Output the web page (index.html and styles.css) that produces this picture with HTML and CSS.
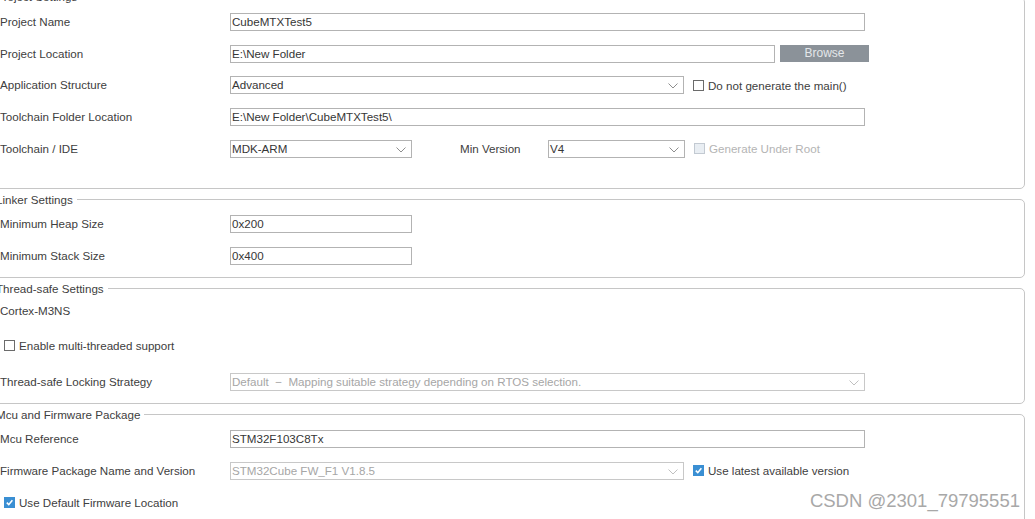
FILE: index.html
```html
<!DOCTYPE html>
<html>
<head>
<meta charset="utf-8">
<title>Project Settings</title>
<link rel="stylesheet" href="styles.css">
</head>
<body>
<div class="page">
  <fieldset class="group g-project">
    <legend>Project Settings</legend>
    <div class="row">
      <span class="label">Project Name</span>
      <div class="field w-full">CubeMTXTest5</div>
    </div>
    <div class="row">
      <span class="label">Project Location</span>
      <div class="field w-loc">E:\New Folder</div>
      <div class="btn">Browse</div>
    </div>
    <div class="row">
      <span class="label">Application Structure</span>
      <div class="field select w-wide">Advanced<svg class="chev" viewBox="0 0 10 6"><polyline points="0.5,0.5 5,5 9.5,0.5"/></svg></div>
      <label class="check"><span class="box"></span>Do not generate the main()</label>
    </div>
    <div class="row">
      <span class="label">Toolchain Folder Location</span>
      <div class="field w-full">E:\New Folder\CubeMTXTest5\</div>
    </div>
    <div class="row">
      <span class="label">Toolchain / IDE</span>
      <div class="field select w-short">MDK-ARM<svg class="chev" viewBox="0 0 10 6"><polyline points="0.5,0.5 5,5 9.5,0.5"/></svg></div>
      <span class="minlabel">Min Version</span>
      <div class="field select w-ver">V4<svg class="chev" viewBox="0 0 10 6"><polyline points="0.5,0.5 5,5 9.5,0.5"/></svg></div>
      <label class="check disabled"><span class="box"></span>Generate Under Root</label>
    </div>
  </fieldset>

  <fieldset class="group g-linker">
    <legend>Linker Settings</legend>
    <div class="row">
      <span class="label">Minimum Heap Size</span>
      <div class="field w-short">0x200</div>
    </div>
    <div class="row">
      <span class="label">Minimum Stack Size</span>
      <div class="field w-short">0x400</div>
    </div>
  </fieldset>

  <fieldset class="group g-thread">
    <legend>Thread-safe Settings</legend>
    <div class="row row-core">
      <span class="label">Cortex-M3NS</span>
    </div>
    <div class="row row-multi">
      <label class="check inset"><span class="box"></span>Enable multi-threaded support</label>
    </div>
    <div class="row">
      <span class="label">Thread-safe Locking Strategy</span>
      <div class="field select w-full dim">Default &nbsp;&minus;&nbsp; Mapping suitable strategy depending on RTOS selection.<svg class="chev" viewBox="0 0 10 6"><polyline points="0.5,0.5 5,5 9.5,0.5"/></svg></div>
    </div>
  </fieldset>

  <fieldset class="group g-mcu">
    <legend>Mcu and Firmware Package</legend>
    <div class="row">
      <span class="label">Mcu Reference</span>
      <div class="field w-full">STM32F103C8Tx</div>
    </div>
    <div class="row">
      <span class="label">Firmware Package Name and Version</span>
      <div class="field select w-wide dim">STM32Cube FW_F1 V1.8.5<svg class="chev" viewBox="0 0 10 6"><polyline points="0.5,0.5 5,5 9.5,0.5"/></svg></div>
      <label class="check checked"><span class="box"><svg viewBox="0 0 10 10"><polyline points="2,5.2 4.2,7.4 8.2,2.6"/></svg></span>Use latest available version</label>
    </div>
    <div class="row">
      <label class="check checked inset"><span class="box"><svg viewBox="0 0 10 10"><polyline points="2,5.2 4.2,7.4 8.2,2.6"/></svg></span>Use Default Firmware Location</label>
    </div>
  </fieldset>
</div>
<div class="watermark">CSDN @2301_79795551</div>
</body>
</html>
```

FILE: styles.css
```css
html, body {
  margin: 0;
  padding: 0;
  background: #ffffff;
  overflow: hidden;
}

body {
  width: 1035px;
  height: 519px;
  position: relative;
  font-family: "Liberation Sans", Arial, sans-serif;
  font-size: 11.6px;
  color: #404040;
}

.page {
  margin: -10px 10px 0 -12px;
}

.group {
  margin: 0 0 4px 0;
  border: 1px solid #c6c6c6;
  border-radius: 5px;
  padding: 2px 0 0 11px;
  min-width: 0;
}

.group legend {
  font-size: 11.6px;
  line-height: 14px;
  padding: 0 4px 0 1px;
  margin-left: -5px;
  color: #404040;
}

.g-project { padding-bottom: 23px; }
.g-project .row { height: 31.75px; }
.g-linker { padding-top: 1px; padding-bottom: 5px; }
.g-thread { padding-top: 0; padding-bottom: 5px; }
.g-mcu { padding-top: 1px; padding-bottom: 30px; }

.row {
  display: flex;
  align-items: center;
  height: 32px;
}

.g-thread .row-core { height: 30px; }
.g-thread .row-multi { height: 40px; }

.label {
  width: 230px;
  flex: none;
  white-space: nowrap;
  padding-bottom: 1px;
}

.minlabel {
  margin-left: 48px;
  width: 88px;
  flex: none;
  padding-bottom: 1px;
}

.field {
  position: relative;
  box-sizing: border-box;
  height: 18px;
  line-height: 16px;
  border: 1px solid #b3b3b3;
  background: #fff;
  padding: 0 0 0 1px;
  color: #363636;
  white-space: nowrap;
  overflow: hidden;
  flex: none;
}

.field.dim {
  color: #a6a6a6;
  border-color: #c8c8c8;
}

.w-full { width: 635px; }
.w-loc { width: 545px; }
.w-wide { width: 454px; }
.w-short { width: 182px; }
.w-ver { width: 137px; }

.chev {
  position: absolute;
  right: 5px;
  top: 6px;
  width: 10px;
  height: 6px;
  fill: none;
  stroke: #8e8e8e;
  stroke-width: 1;
}

.dim .chev { stroke: #c0c0c0; }

.btn {
  flex: none;
  box-sizing: border-box;
  margin-left: 5px;
  width: 89px;
  height: 17px;
  line-height: 17px;
  background: #8b9299;
  color: #e4e7ea;
  text-align: center;
  font-size: 12px;
}

.check {
  display: flex;
  align-items: center;
  margin-left: 9px;
  white-space: nowrap;
  color: #404040;
}

.check.inset { margin-left: 4px; }

.check .box {
  box-sizing: border-box;
  width: 11px;
  height: 11px;
  border: 1px solid #6b6b6b;
  background: #fff;
  margin-right: 4px;
  flex: none;
  display: flex;
}

.check.disabled { color: #b4b4b4; }
.check.disabled .box {
  border-color: #c3cad2;
  background: #e9eef3;
}

.check.checked .box {
  border-color: #3a8fd3;
  background: #3a8fd3;
}

.check .box svg {
  width: 9px;
  height: 9px;
  fill: none;
  stroke: #fff;
  stroke-width: 1.8;
}

.watermark {
  position: absolute;
  right: 15px;
  bottom: 7px;
  font-family: "Liberation Sans", Arial, sans-serif;
  font-size: 18.5px;
  color: #a8a8a8;
  text-shadow: 0 0 2px #fff, 0 0 2px #fff;
}
```
